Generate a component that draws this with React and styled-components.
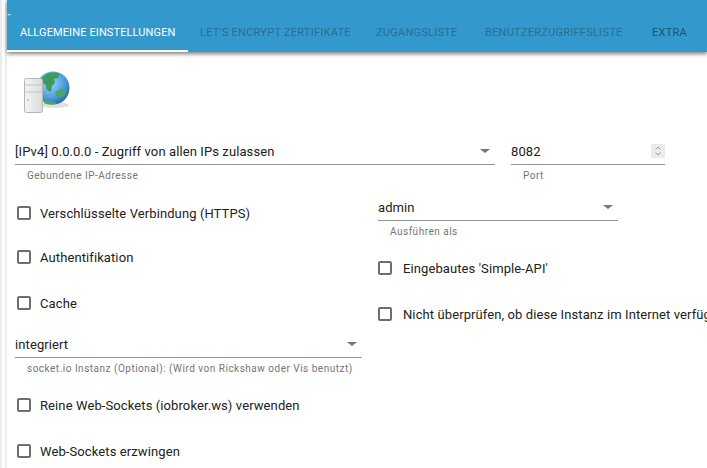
import React from "react";
import styled, { createGlobalStyle } from "styled-components";

const Global = createGlobalStyle`
  html, body {
    margin: 0;
    padding: 0;
    background: #fff;
    overflow: hidden;
  }
  body {
    font-family: Roboto, "Liberation Sans", sans-serif;
    color: #212121;
  }
`;

const Page = styled.div`
  width: 707px;
  height: 468px;
  overflow: hidden;
  display: flex;
  background: #fff;
`;

const LeftEdge = styled.div`
  width: 7px;
  flex: none;
  box-sizing: border-box;
  border-left: 2px solid #ececec;
  border-right: 2px solid #ececec;
`;

const Main = styled.div`
  flex: 1;
  min-width: 0;
`;

const Header = styled.header`
  height: 52px;
  background: #3399cc;
  display: flex;
  align-items: flex-end;
  box-shadow: 0 2px 4px rgba(0, 0, 0, 0.5);
  position: relative;
`;

const Notch = styled.span`
  position: absolute;
  left: 0;
  top: 14px;
  width: 0;
  height: 0;
  border-left: 2px solid transparent;
  border-right: 2px solid transparent;
  border-top: 2px solid #b9d9ea;
`;

const Tab = styled.div`
  height: 40px;
  box-sizing: border-box;
  padding: 9px 0 0 ${(p) => (p.$active ? 13 : 12)}px;
  font-size: 11px;
  line-height: 24px;
  letter-spacing: ${(p) => (p.$active ? 0.12 : 0.25)}px;
  white-space: nowrap;
  width: ${(p) => p.$w}px;
  color: ${(p) => (p.$active ? "#ffffff" : p.$dark ? "#1e5570" : "#256f94")};
  border-bottom: 2px solid ${(p) => (p.$active ? "#ffffff" : "transparent")};
`;

const Content = styled.div`
  padding: 16px 0 0 8px;
`;

const Logo = styled.svg`
  display: block;
  width: 48px;
  height: 48px;
  margin-left: 8px;
`;

const TopRow = styled.div`
  display: flex;
  gap: 16px;
  margin-top: 24px;
`;

const Columns = styled.div`
  display: flex;
  gap: 16px;
  margin-top: 14px;
`;

const Column = styled.div`
  width: ${(p) => p.$w}px;
  flex: none;
`;

const Field = styled.div`
  width: ${(p) => p.$w}px;
  flex: none;
  margin-top: ${(p) => p.$top || 0}px;
`;

const Control = styled.div`
  height: 25px;
  box-sizing: border-box;
  padding-bottom: 2px;
  border-bottom: 1px solid #949494;
  display: flex;
  align-items: center;
  justify-content: space-between;
  font-size: 13px;
  color: #212121;
  letter-spacing: 0.1px;
`;

const Arrow = styled.span`
  width: 0;
  height: 0;
  margin-right: 5px;
  border-left: 5px solid transparent;
  border-right: 5px solid transparent;
  border-top: 4px solid #757575;
`;

const Spinner = styled.svg`
  width: 14px;
  height: 14px;
  display: block;
  background: #ebebeb;
`;

const Helper = styled.div`
  margin: 5px 0 0 12px;
  font-size: 10px;
  line-height: 12px;
  letter-spacing: 0.5px;
  color: #757575;
  white-space: nowrap;
`;

const CheckRow = styled.label`
  display: flex;
  align-items: center;
  gap: ${(p) => p.$gap}px;
  height: 20px;
  margin-top: ${(p) => p.$top}px;
  padding-left: ${(p) => p.$inset}px;
  font-size: 13px;
  letter-spacing: 0.1px;
  color: #212121;
  white-space: nowrap;
`;

const Box = styled.span`
  width: 14px;
  height: 14px;
  flex: none;
  box-sizing: border-box;
  border: 2px solid #6e6e6e;
  border-radius: 2px;
`;

const Check = ({ top, right, children }) => (
  <CheckRow $top={top} $gap={right ? 11 : 9} $inset={right ? 0 : 2}>
    <Box />
    {children}
  </CheckRow>
);

const ServerGlobe = () => (
  <Logo viewBox="0 0 48 48">
    <defs>
      <radialGradient id="sea" cx="0.4" cy="0.35" r="0.75">
        <stop offset="0" stopColor="#a5d6f4" />
        <stop offset="0.6" stopColor="#4a9ede" />
        <stop offset="1" stopColor="#1d5a94" />
      </radialGradient>
      <linearGradient id="case" x1="0" y1="0" x2="1" y2="0">
        <stop offset="0" stopColor="#f4f4f4" />
        <stop offset="1" stopColor="#dcdcdc" />
      </linearGradient>
    </defs>
    <ellipse cx="31" cy="37" rx="15" ry="3" fill="#000" opacity="0.12" />
    <circle cx="30" cy="20" r="16.500" fill="url(#sea)" />
    <path d="M23 6c5-2 10-2 14 0l-2 4-4 1 1 4-3 3-1 6-4-2-2-6-4-1 1-5z" fill="#3f9a5b" />
    <path d="M32 24l6-3 6 1-3 6-6 2-2-3zM21 32c4 0 9 1 13 3-4 2-9 2-13 0z" fill="#4aa56a" />
    <rect x="1.500" y="10.500" width="18" height="34" rx="2" fill="url(#case)" stroke="#b5b5b5" />
    <path d="M2 17h17M2 24h17" stroke="#c4c4c4" />
    <circle cx="5" cy="32" r="1" fill="#bbb" />
  </Logo>
);

export default function App() {
  return (
    <Page>
      <Global />
      <LeftEdge />
      <Main>
        <Header>
          <Notch />
          <Tab $active $w={181}>ALLGEMEINE EINSTELLUNGEN</Tab>
          <Tab $w={176}>LET'S ENCRYPT ZERTIFIKATE</Tab>
          <Tab $w={109}>ZUGANGSLISTE</Tab>
          <Tab $w={167}>BENUTZERZUGRIFFSLISTE</Tab>
          <Tab $dark $w={67}>EXTRA</Tab>
        </Header>
        <Content>
          <ServerGlobe />
          <TopRow>
            <Field $w={480}>
              <Control>
                [IPv4] 0.0.0.0 - Zugriff von allen IPs zulassen
                <Arrow />
              </Control>
              <Helper>Gebundene IP-Adresse</Helper>
            </Field>
            <Field $w={154}>
              <Control>
                8082
                <Spinner viewBox="0 0 14 14">
                  <path d="M4.500 5.500 7 3l2.500 2.500M4.500 8.500 7 11l2.500-2.500" fill="none" stroke="#a0a0a0" />
                </Spinner>
              </Control>
              <Helper>Port</Helper>
            </Field>
          </TopRow>
          <Columns>
            <Column $w={347}>
              <Check top={7}>Verschlüsselte Verbindung (HTTPS)</Check>
              <Check top={24}>Authentifikation</Check>
              <Check top={26}>Cache</Check>
              <Field $w={347} $top={20}>
                <Control>
                  integriert
                  <Arrow />
                </Control>
                <Helper>socket.io Instanz (Optional): (Wird von Rickshaw oder Vis benutzt)</Helper>
              </Field>
              <Check top={20}>Reine Web-Sockets (iobroker.ws) verwenden</Check>
              <Check top={26}>Web-Sockets erzwingen</Check>
            </Column>
            <Column $w={240}>
              <Field $w={240}>
                <Control>
                  admin
                  <Arrow />
                </Control>
                <Helper>Ausführen als</Helper>
              </Field>
              <Check right top={20}>Eingebautes 'Simple-API'</Check>
              <Check right top={26}>Nicht überprüfen, ob diese Instanz im Internet verfügbar ist</Check>
            </Column>
          </Columns>
        </Content>
      </Main>
    </Page>
  );
}
